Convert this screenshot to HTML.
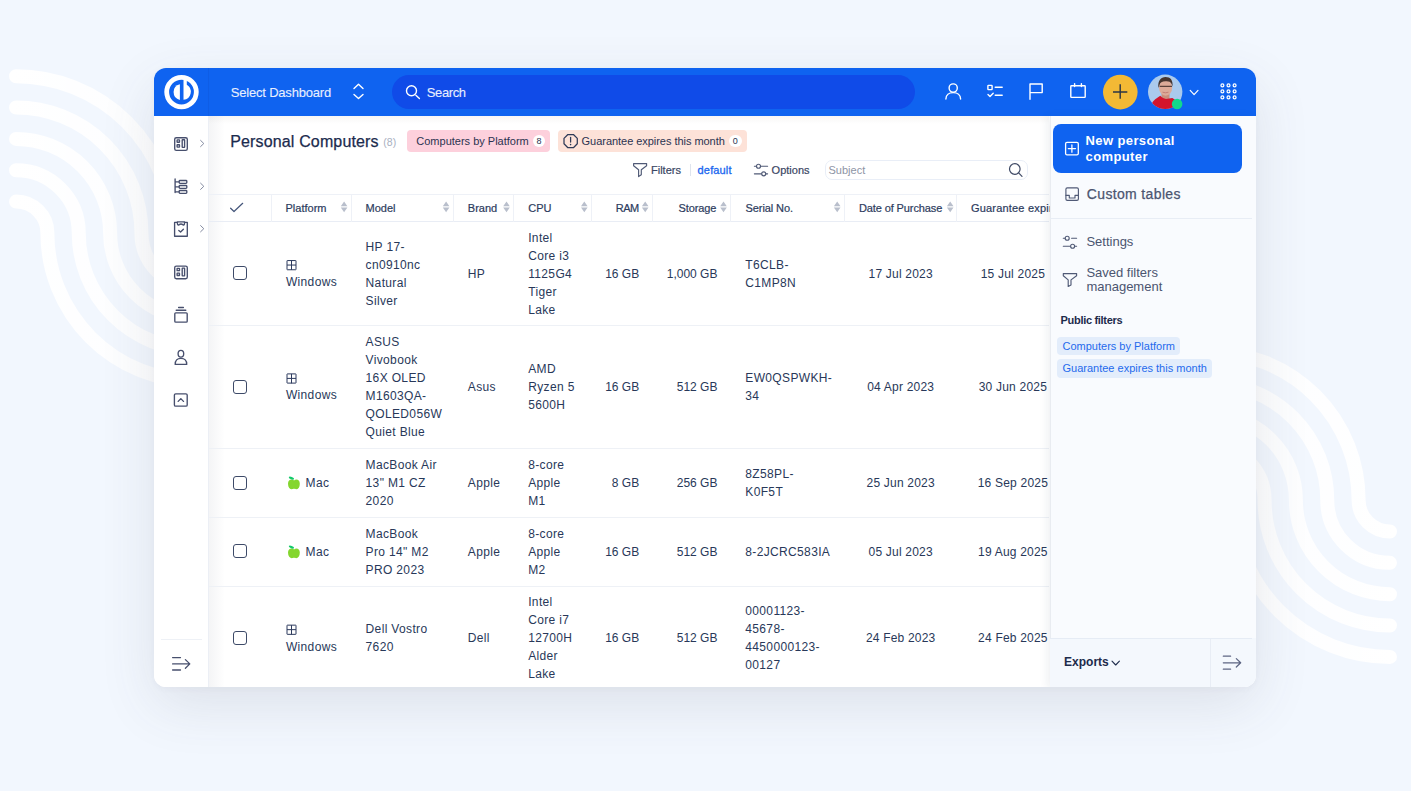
<!DOCTYPE html><html><head><meta charset="utf-8"><title>Personal Computers</title><style>
*{margin:0;padding:0;box-sizing:border-box}
html,body{width:1411px;height:791px;overflow:hidden}
body{font-family:"Liberation Sans",sans-serif;background:#f2f7fe;position:relative;color:#263655}
.t{position:absolute;white-space:nowrap;line-height:16px}
#deco{position:absolute;left:0;top:0}
#card{position:absolute;left:154px;top:68px;width:1102px;height:619.3px;border-radius:12px;overflow:hidden;background:#fff;box-shadow:0 18px 55px rgba(70,75,90,.12),0 2px 6px rgba(70,75,90,.04)}
.blk{position:absolute}
#ovl{position:absolute;left:0;top:0;pointer-events:none}
.hl{position:absolute;height:1px;background:#e9eef6}
.vl{position:absolute;width:1px;background:#e9eef6}
</style></head><body>
<svg id="deco" width="1411" height="791" viewBox="0 0 1411 791"><defs><linearGradient id="ag" gradientUnits="userSpaceOnUse" x1="10" y1="0" x2="170" y2="0"><stop offset="0" stop-color="#fff" stop-opacity="1"/><stop offset="1" stop-color="#fff" stop-opacity="0.82"/></linearGradient></defs><g fill="none" stroke="url(#ag)" stroke-width="14" stroke-linecap="round"><path d="M16,201.60 A31.40,31.40 0 0 1 47.40,233 A147.90,147.90 0 0 0 195.30,380.90"/><path d="M16,170.25 A62.75,62.75 0 0 1 78.75,233 A116.55,116.55 0 0 0 195.30,349.55"/><path d="M16,138.90 A94.10,94.10 0 0 1 110.10,233 A85.20,85.20 0 0 0 195.30,318.20"/><path d="M16,107.55 A125.45,125.45 0 0 1 141.45,233 A53.85,53.85 0 0 0 195.30,286.85"/><path d="M16,76.20 A156.80,156.80 0 0 1 172.80,233 A22.50,22.50 0 0 0 195.30,255.50"/></g><g fill="none" stroke="url(#ag)" stroke-width="14" stroke-linecap="round" transform="rotate(180 703 366.55)"><path d="M16,201.60 A31.40,31.40 0 0 1 47.40,233 A147.90,147.90 0 0 0 195.30,380.90"/><path d="M16,170.25 A62.75,62.75 0 0 1 78.75,233 A116.55,116.55 0 0 0 195.30,349.55"/><path d="M16,138.90 A94.10,94.10 0 0 1 110.10,233 A85.20,85.20 0 0 0 195.30,318.20"/><path d="M16,107.55 A125.45,125.45 0 0 1 141.45,233 A53.85,53.85 0 0 0 195.30,286.85"/><path d="M16,76.20 A156.80,156.80 0 0 1 172.80,233 A22.50,22.50 0 0 0 195.30,255.50"/></g></svg>
<div id="card">
<div class="blk" style="left:0.00px;top:0.00px;width:1102.00px;height:48.00px;background:#0f63f0"></div>
<div class="blk" style="left:54.00px;top:0.00px;width:1.00px;height:48.00px;background:#0e5de6"></div>
<div class="blk" style="left:237.50px;top:7.00px;width:523.50px;height:34.00px;background:#104be8;border-radius:17px"></div>
<div class="t" style="left:76.80px;top:16.60px;font-size:13px;color:#e8efff;letter-spacing:-0.2px;-webkit-text-stroke:0.1px #e8efff;">Select Dashboard</div>
<div class="t" style="left:272.80px;top:16.60px;font-size:13px;color:#e8efff;letter-spacing:-0.4px;-webkit-text-stroke:0.1px #e8efff;">Search</div>
<div class="blk" style="left:0.00px;top:48.00px;width:54.00px;height:572.00px;background:#fff"></div>
<div class="blk" style="left:54.00px;top:48.00px;width:1.00px;height:572.00px;background:#eceff5"></div>
<div class="blk" style="left:7.00px;top:571.00px;width:41.00px;height:1.00px;background:#eef1f6"></div>
<div class="blk" style="left:55.00px;top:48.00px;width:840.00px;height:572.00px;background:#fff"></div>
<div class="blk" style="left:55.00px;top:48.00px;width:16.00px;height:572.00px;background:linear-gradient(90deg,rgba(40,50,80,.05),rgba(40,50,80,0))"></div>
<div class="blk" style="left:55.00px;top:48.00px;width:840.00px;height:8.00px;background:linear-gradient(180deg,rgba(90,80,60,.05),rgba(90,80,60,0))"></div>
<div class="t" style="left:76.20px;top:65.81px;font-size:16px;color:#1b2b4e;letter-spacing:0.15px;-webkit-text-stroke:0.25px #1b2b4e;">Personal Computers</div>
<div class="t" style="left:229.30px;top:65.68px;font-size:10.5px;color:#a8b0bf;">(8)</div>
<div class="blk" style="left:253.00px;top:62.00px;width:143.40px;height:22.00px;background:#fdd0dc;border-radius:4px"></div>
<div class="t" style="left:262.30px;top:64.96px;font-size:11px;color:#2b3350;">Computers by Platform</div>
<div class="blk" style="left:378.60px;top:66.70px;width:12.60px;height:12.60px;background:#fff;border-radius:6.3px"></div>
<div class="t" style="left:382.00px;top:64.83px;font-size:9px;color:#2b3350;width:6px;text-align:center;">8</div>
<div class="blk" style="left:403.70px;top:62.20px;width:189.20px;height:21.60px;background:#fde2d8;border-radius:4px"></div>
<div class="t" style="left:427.60px;top:64.96px;font-size:11px;color:#2b3350;letter-spacing:-0.04px;">Guarantee expires this month</div>
<div class="blk" style="left:575.00px;top:66.70px;width:12.60px;height:12.60px;background:#fff;border-radius:6.3px"></div>
<div class="t" style="left:578.30px;top:64.83px;font-size:9px;color:#2b3350;width:6px;text-align:center;">0</div>
<div class="t" style="left:497.00px;top:93.66px;font-size:11px;color:#3a4663;-webkit-text-stroke:0.2px #3a4663;">Filters</div>
<div class="blk" style="left:535.50px;top:96.00px;width:1.00px;height:11.60px;background:#dfe4ee"></div>
<div class="t" style="left:543.60px;top:93.66px;font-size:11px;color:#1a66ef;letter-spacing:0.15px;-webkit-text-stroke:0.3px #1a66ef;">default</div>
<div class="t" style="left:617.60px;top:93.66px;font-size:11px;color:#3a4663;-webkit-text-stroke:0.2px #3a4663;">Options</div>
<div class="blk" style="left:671.20px;top:91.60px;width:203.20px;height:20.20px;background:#fff;border:1px solid #e9eef7;border-radius:7px"></div>
<div class="t" style="left:674.50px;top:93.86px;font-size:11px;color:#8d94a5;">Subject</div>
<div class="blk" style="left:55.00px;top:126.30px;width:840.00px;height:1.00px;background:#eef1f7"></div>
<div class="blk" style="left:55.00px;top:153.20px;width:840.00px;height:1.00px;background:#e9edf5"></div>
<div class="blk" style="left:117.20px;top:127.00px;width:1.00px;height:26.50px;background:#eef1f7"></div>
<div class="blk" style="left:196.90px;top:127.00px;width:1.00px;height:26.50px;background:#eef1f7"></div>
<div class="blk" style="left:298.90px;top:127.00px;width:1.00px;height:26.50px;background:#eef1f7"></div>
<div class="blk" style="left:359.10px;top:127.00px;width:1.00px;height:26.50px;background:#eef1f7"></div>
<div class="blk" style="left:436.90px;top:127.00px;width:1.00px;height:26.50px;background:#eef1f7"></div>
<div class="blk" style="left:498.00px;top:127.00px;width:1.00px;height:26.50px;background:#eef1f7"></div>
<div class="blk" style="left:575.80px;top:127.00px;width:1.00px;height:26.50px;background:#eef1f7"></div>
<div class="blk" style="left:689.70px;top:127.00px;width:1.00px;height:26.50px;background:#eef1f7"></div>
<div class="blk" style="left:802.00px;top:127.00px;width:1.00px;height:26.50px;background:#eef1f7"></div>
<div class="t" style="left:131.50px;top:131.56px;font-size:11px;color:#2c3b5d;-webkit-text-stroke:0.2px #2c3b5d;">Platform</div>
<div class="t" style="left:211.60px;top:131.56px;font-size:11px;color:#2c3b5d;-webkit-text-stroke:0.2px #2c3b5d;">Model</div>
<div class="t" style="left:313.80px;top:131.56px;font-size:11px;color:#2c3b5d;-webkit-text-stroke:0.2px #2c3b5d;">Brand</div>
<div class="t" style="left:374.20px;top:131.56px;font-size:11px;color:#2c3b5d;-webkit-text-stroke:0.2px #2c3b5d;">CPU</div>
<div class="t" style="left:461.70px;top:131.56px;font-size:11px;color:#2c3b5d;letter-spacing:-0.5px;-webkit-text-stroke:0.2px #2c3b5d;">RAM</div>
<div class="t" style="left:524.50px;top:131.56px;font-size:11px;color:#2c3b5d;letter-spacing:-0.1px;-webkit-text-stroke:0.2px #2c3b5d;">Storage</div>
<div class="t" style="left:591.60px;top:131.56px;font-size:11px;color:#2c3b5d;letter-spacing:-0.1px;-webkit-text-stroke:0.2px #2c3b5d;">Serial No.</div>
<div class="t" style="left:704.90px;top:131.56px;font-size:11px;color:#2c3b5d;letter-spacing:-0.1px;-webkit-text-stroke:0.2px #2c3b5d;">Date of Purchase</div>
<div class="t" style="left:816.90px;top:131.56px;font-size:11px;color:#2c3b5d;letter-spacing:0.2px;-webkit-text-stroke:0.2px #2c3b5d;">Guarantee expiry</div>
<div class="blk" style="left:79.00px;top:198.35px;width:14.00px;height:14.00px;border:1.3px solid #3d4a68;border-radius:3px"></div>
<div class="t" style="left:131.90px;top:188.05px;font-size:12px;color:#283859;letter-spacing:0.35px;"></div>
<div class="t" style="left:131.90px;top:206.05px;font-size:12px;color:#283859;letter-spacing:0.35px;">Windows</div>
<div class="t" style="left:211.60px;top:170.85px;font-size:12px;color:#283859;letter-spacing:0.35px;">HP 17-</div>
<div class="t" style="left:211.60px;top:188.85px;font-size:12px;color:#283859;letter-spacing:0.35px;">cn0910nc</div>
<div class="t" style="left:211.60px;top:206.85px;font-size:12px;color:#283859;letter-spacing:0.35px;">Natural</div>
<div class="t" style="left:211.60px;top:224.85px;font-size:12px;color:#283859;letter-spacing:0.35px;">Silver</div>
<div class="t" style="left:313.80px;top:197.85px;font-size:12px;color:#283859;letter-spacing:0.35px;">HP</div>
<div class="t" style="left:374.20px;top:161.85px;font-size:12px;color:#283859;letter-spacing:0.35px;">Intel</div>
<div class="t" style="left:374.20px;top:179.85px;font-size:12px;color:#283859;letter-spacing:0.35px;">Core i3</div>
<div class="t" style="left:374.20px;top:197.85px;font-size:12px;color:#283859;letter-spacing:0.35px;">1125G4</div>
<div class="t" style="left:374.20px;top:215.85px;font-size:12px;color:#283859;letter-spacing:0.35px;">Tiger</div>
<div class="t" style="left:374.20px;top:233.85px;font-size:12px;color:#283859;letter-spacing:0.35px;">Lake</div>
<div class="t" style="right:616.80px;top:197.85px;font-size:12px;color:#283859;">16 GB</div>
<div class="t" style="right:538.60px;top:197.85px;font-size:12px;color:#283859;">1,000 GB</div>
<div class="t" style="left:591.30px;top:188.85px;font-size:12px;color:#283859;letter-spacing:0.35px;">T6CLB-</div>
<div class="t" style="left:591.30px;top:206.85px;font-size:12px;color:#283859;letter-spacing:0.35px;">C1MP8N</div>
<div class="t" style="left:646.70px;width:200px;text-align:center;top:197.85px;font-size:12px;color:#283859;letter-spacing:0.2px;">17 Jul 2023</div>
<div class="t" style="left:758.90px;width:200px;text-align:center;top:197.85px;font-size:12px;color:#283859;letter-spacing:0.2px;">15 Jul 2025</div>
<div class="blk" style="left:55.00px;top:257.20px;width:840.00px;height:1.00px;background:#eef1f6"></div>
<div class="blk" style="left:79.00px;top:311.70px;width:14.00px;height:14.00px;border:1.3px solid #3d4a68;border-radius:3px"></div>
<div class="t" style="left:131.90px;top:301.40px;font-size:12px;color:#283859;letter-spacing:0.35px;"></div>
<div class="t" style="left:131.90px;top:319.40px;font-size:12px;color:#283859;letter-spacing:0.35px;">Windows</div>
<div class="t" style="left:211.60px;top:266.20px;font-size:12px;color:#283859;letter-spacing:0.35px;">ASUS</div>
<div class="t" style="left:211.60px;top:284.20px;font-size:12px;color:#283859;letter-spacing:0.35px;">Vivobook</div>
<div class="t" style="left:211.60px;top:302.20px;font-size:12px;color:#283859;letter-spacing:0.35px;">16X OLED</div>
<div class="t" style="left:211.60px;top:320.20px;font-size:12px;color:#283859;letter-spacing:0.35px;">M1603QA-</div>
<div class="t" style="left:211.60px;top:338.20px;font-size:12px;color:#283859;letter-spacing:0.35px;">QOLED056W</div>
<div class="t" style="left:211.60px;top:356.20px;font-size:12px;color:#283859;letter-spacing:0.35px;">Quiet Blue</div>
<div class="t" style="left:313.80px;top:311.20px;font-size:12px;color:#283859;letter-spacing:0.35px;">Asus</div>
<div class="t" style="left:374.20px;top:293.20px;font-size:12px;color:#283859;letter-spacing:0.35px;">AMD</div>
<div class="t" style="left:374.20px;top:311.20px;font-size:12px;color:#283859;letter-spacing:0.35px;">Ryzen 5</div>
<div class="t" style="left:374.20px;top:329.20px;font-size:12px;color:#283859;letter-spacing:0.35px;">5600H</div>
<div class="t" style="right:616.80px;top:311.20px;font-size:12px;color:#283859;">16 GB</div>
<div class="t" style="right:538.60px;top:311.20px;font-size:12px;color:#283859;">512 GB</div>
<div class="t" style="left:591.30px;top:302.20px;font-size:12px;color:#283859;letter-spacing:0.35px;">EW0QSPWKH-</div>
<div class="t" style="left:591.30px;top:320.20px;font-size:12px;color:#283859;letter-spacing:0.35px;">34</div>
<div class="t" style="left:646.70px;width:200px;text-align:center;top:311.20px;font-size:12px;color:#283859;letter-spacing:0.2px;">04 Apr 2023</div>
<div class="t" style="left:758.90px;width:200px;text-align:center;top:311.20px;font-size:12px;color:#283859;letter-spacing:0.2px;">30 Jun 2025</div>
<div class="blk" style="left:55.00px;top:379.80px;width:840.00px;height:1.00px;background:#eef1f6"></div>
<div class="blk" style="left:79.00px;top:407.55px;width:14.00px;height:14.00px;border:1.3px solid #3d4a68;border-radius:3px"></div>
<div class="t" style="left:151.60px;top:407.05px;font-size:12px;color:#283859;letter-spacing:0.35px;">Mac</div>
<div class="t" style="left:211.60px;top:389.05px;font-size:12px;color:#283859;letter-spacing:0.35px;">MacBook Air</div>
<div class="t" style="left:211.60px;top:407.05px;font-size:12px;color:#283859;letter-spacing:0.35px;">13&quot; M1 CZ</div>
<div class="t" style="left:211.60px;top:425.05px;font-size:12px;color:#283859;letter-spacing:0.35px;">2020</div>
<div class="t" style="left:313.80px;top:407.05px;font-size:12px;color:#283859;letter-spacing:0.35px;">Apple</div>
<div class="t" style="left:374.20px;top:389.05px;font-size:12px;color:#283859;letter-spacing:0.35px;">8-core</div>
<div class="t" style="left:374.20px;top:407.05px;font-size:12px;color:#283859;letter-spacing:0.35px;">Apple</div>
<div class="t" style="left:374.20px;top:425.05px;font-size:12px;color:#283859;letter-spacing:0.35px;">M1</div>
<div class="t" style="right:616.80px;top:407.05px;font-size:12px;color:#283859;">8 GB</div>
<div class="t" style="right:538.60px;top:407.05px;font-size:12px;color:#283859;">256 GB</div>
<div class="t" style="left:591.30px;top:398.05px;font-size:12px;color:#283859;letter-spacing:0.35px;">8Z58PL-</div>
<div class="t" style="left:591.30px;top:416.05px;font-size:12px;color:#283859;letter-spacing:0.35px;">K0F5T</div>
<div class="t" style="left:646.70px;width:200px;text-align:center;top:407.05px;font-size:12px;color:#283859;letter-spacing:0.2px;">25 Jun 2023</div>
<div class="t" style="left:758.90px;width:200px;text-align:center;top:407.05px;font-size:12px;color:#283859;letter-spacing:0.2px;">16 Sep 2025</div>
<div class="blk" style="left:55.00px;top:448.90px;width:840.00px;height:1.00px;background:#eef1f6"></div>
<div class="blk" style="left:79.00px;top:476.45px;width:14.00px;height:14.00px;border:1.3px solid #3d4a68;border-radius:3px"></div>
<div class="t" style="left:151.60px;top:475.95px;font-size:12px;color:#283859;letter-spacing:0.35px;">Mac</div>
<div class="t" style="left:211.60px;top:457.95px;font-size:12px;color:#283859;letter-spacing:0.35px;">MacBook</div>
<div class="t" style="left:211.60px;top:475.95px;font-size:12px;color:#283859;letter-spacing:0.35px;">Pro 14&quot; M2</div>
<div class="t" style="left:211.60px;top:493.95px;font-size:12px;color:#283859;letter-spacing:0.35px;">PRO 2023</div>
<div class="t" style="left:313.80px;top:475.95px;font-size:12px;color:#283859;letter-spacing:0.35px;">Apple</div>
<div class="t" style="left:374.20px;top:457.95px;font-size:12px;color:#283859;letter-spacing:0.35px;">8-core</div>
<div class="t" style="left:374.20px;top:475.95px;font-size:12px;color:#283859;letter-spacing:0.35px;">Apple</div>
<div class="t" style="left:374.20px;top:493.95px;font-size:12px;color:#283859;letter-spacing:0.35px;">M2</div>
<div class="t" style="right:616.80px;top:475.95px;font-size:12px;color:#283859;">16 GB</div>
<div class="t" style="right:538.60px;top:475.95px;font-size:12px;color:#283859;">512 GB</div>
<div class="t" style="left:591.30px;top:475.95px;font-size:12px;color:#283859;letter-spacing:0.35px;">8-2JCRC583IA</div>
<div class="t" style="left:646.70px;width:200px;text-align:center;top:475.95px;font-size:12px;color:#283859;letter-spacing:0.2px;">05 Jul 2023</div>
<div class="t" style="left:758.90px;width:200px;text-align:center;top:475.95px;font-size:12px;color:#283859;letter-spacing:0.2px;">19 Aug 2025</div>
<div class="blk" style="left:55.00px;top:517.60px;width:840.00px;height:1.00px;background:#eef1f6"></div>
<div class="blk" style="left:79.00px;top:562.95px;width:14.00px;height:14.00px;border:1.3px solid #3d4a68;border-radius:3px"></div>
<div class="t" style="left:131.90px;top:552.65px;font-size:12px;color:#283859;letter-spacing:0.35px;"></div>
<div class="t" style="left:131.90px;top:570.65px;font-size:12px;color:#283859;letter-spacing:0.35px;">Windows</div>
<div class="t" style="left:211.60px;top:553.45px;font-size:12px;color:#283859;letter-spacing:0.35px;">Dell Vostro</div>
<div class="t" style="left:211.60px;top:571.45px;font-size:12px;color:#283859;letter-spacing:0.35px;">7620</div>
<div class="t" style="left:313.80px;top:562.45px;font-size:12px;color:#283859;letter-spacing:0.35px;">Dell</div>
<div class="t" style="left:374.20px;top:526.45px;font-size:12px;color:#283859;letter-spacing:0.35px;">Intel</div>
<div class="t" style="left:374.20px;top:544.45px;font-size:12px;color:#283859;letter-spacing:0.35px;">Core i7</div>
<div class="t" style="left:374.20px;top:562.45px;font-size:12px;color:#283859;letter-spacing:0.35px;">12700H</div>
<div class="t" style="left:374.20px;top:580.45px;font-size:12px;color:#283859;letter-spacing:0.35px;">Alder</div>
<div class="t" style="left:374.20px;top:598.45px;font-size:12px;color:#283859;letter-spacing:0.35px;">Lake</div>
<div class="t" style="right:616.80px;top:562.45px;font-size:12px;color:#283859;">16 GB</div>
<div class="t" style="right:538.60px;top:562.45px;font-size:12px;color:#283859;">512 GB</div>
<div class="t" style="left:591.30px;top:535.45px;font-size:12px;color:#283859;letter-spacing:0.35px;">00001123-</div>
<div class="t" style="left:591.30px;top:553.45px;font-size:12px;color:#283859;letter-spacing:0.35px;">45678-</div>
<div class="t" style="left:591.30px;top:571.45px;font-size:12px;color:#283859;letter-spacing:0.35px;">4450000123-</div>
<div class="t" style="left:591.30px;top:589.45px;font-size:12px;color:#283859;letter-spacing:0.35px;">00127</div>
<div class="t" style="left:646.70px;width:200px;text-align:center;top:562.45px;font-size:12px;color:#283859;letter-spacing:0.2px;">24 Feb 2023</div>
<div class="t" style="left:758.90px;width:200px;text-align:center;top:562.45px;font-size:12px;color:#283859;letter-spacing:0.2px;">24 Feb 2025</div>
<div class="blk" style="left:895.50px;top:48.00px;width:206.50px;height:572.00px;background:#f9fbfe;box-shadow:-3px 0 8px rgba(30,50,90,.07)"></div>
<div class="blk" style="left:895.50px;top:48.00px;width:1.00px;height:572.00px;background:#e9ecf1"></div>
<div class="blk" style="left:899.10px;top:56.00px;width:189.10px;height:49.20px;background:#0f63f0;border-radius:8px"></div>
<div class="t" style="left:931.50px;top:65.20px;font-size:13px;color:#ffffff;font-weight:bold;letter-spacing:0.4px;">New personal</div>
<div class="t" style="left:931.50px;top:80.50px;font-size:13px;color:#ffffff;font-weight:bold;letter-spacing:0.4px;">computer</div>
<div class="t" style="left:932.80px;top:117.87px;font-size:14px;color:#4b5570;letter-spacing:0.35px;-webkit-text-stroke:0.25px #4b5570;">Custom tables</div>
<div class="blk" style="left:896.00px;top:150.00px;width:202.00px;height:1.00px;background:#e8edf5"></div>
<div class="t" style="left:932.40px;top:165.90px;font-size:13px;color:#4b5570;">Settings</div>
<div class="t" style="left:932.40px;top:197.30px;font-size:13px;color:#4b5570;">Saved filters</div>
<div class="t" style="left:932.40px;top:211.00px;font-size:13px;color:#4b5570;">management</div>
<div class="t" style="left:906.50px;top:244.06px;font-size:11px;color:#1d2b4b;font-weight:bold;letter-spacing:-0.3px;">Public filters</div>
<div class="blk" style="left:903.00px;top:268.70px;width:123.00px;height:18.20px;background:#e3edfb;border-radius:4px"></div>
<div class="t" style="left:908.50px;top:269.66px;font-size:11px;color:#1f6aed;">Computers by Platform</div>
<div class="blk" style="left:903.00px;top:291.00px;width:155.00px;height:18.80px;background:#e3edfb;border-radius:4px"></div>
<div class="t" style="left:908.50px;top:291.76px;font-size:11px;color:#1f6aed;">Guarantee expires this month</div>
<div class="blk" style="left:895.50px;top:570.00px;width:206.50px;height:50.00px;background:#f4f8fd"></div>
<div class="blk" style="left:896.00px;top:570.00px;width:202.00px;height:1.00px;background:#e6ecf5"></div>
<div class="blk" style="left:1056.00px;top:571.00px;width:1.00px;height:49.00px;background:#e8edf5"></div>
<div class="t" style="left:910.10px;top:586.03px;font-size:12px;color:#1d2b4b;font-weight:bold;">Exports</div>
</div>
<svg id="ovl" width="1411" height="791" viewBox="0 0 1411 791"><circle cx="181.5" cy="92.1" r="14.8" fill="none" stroke="#fff" stroke-width="4.8"/><path d="M179.9,84.2 A8.1,8.1 0 0 0 179.9,100 Z" fill="#fff"/><path d="M183.5,79.6 H186.8 V84.8 A8.1,8.1 0 0 1 183.5,99.85 Z" fill="#fff"/><g fill="none" stroke="#ffffff" stroke-width="1.4" stroke-linecap="round" stroke-linejoin="round"><path d="M354,88.5 L358.5,84.2 L363,88.5 M354,94.4 L358.5,98.5 L363,94.4"/><circle cx="411.5" cy="90.8" r="5"/><path d="M415.9,95.3 L419.4,98.6"/><circle cx="953.2" cy="88" r="4.1"/><path d="M945.9,99 C945.9,94.9 949.1,92.6 953.2,92.6 C957.3,92.6 960.6,94.9 960.6,99"/><rect x="987.9" y="85.4" width="4.2" height="4.2" rx="0.5"/><path d="M995.2,87.3 H1002.2 M995.2,95.2 H1002.2 M988,94.6 L990,96.6 L993.2,93.2"/><path d="M1030,99.2 V84 H1042.2 V92.6 H1030.3"/><rect x="1070.8" y="85.8" width="14.4" height="11.6" rx="0.6"/><path d="M1074.6,83.6 V86.5 M1081.4,83.6 V86.5"/><path d="M1190.2,90.4 L1194.1,94.6 L1198,90.4" stroke-width="1.2"/></g><g fill="none" stroke="#fff" stroke-width="1.25"><circle cx="1222.4" cy="85.4" r="1.45"/><circle cx="1222.4" cy="91.4" r="1.45"/><circle cx="1222.4" cy="97.4" r="1.45"/><circle cx="1228.5" cy="85.4" r="1.45"/><circle cx="1228.5" cy="91.4" r="1.45"/><circle cx="1228.5" cy="97.4" r="1.45"/><circle cx="1234.6" cy="85.4" r="1.45"/><circle cx="1234.6" cy="91.4" r="1.45"/><circle cx="1234.6" cy="97.4" r="1.45"/></g><circle cx="1120.3" cy="92.1" r="17.3" fill="#f3b935"/><path d="M1113,92 H1127.3 M1120.2,84.3 V98.8" stroke="#2b3445" stroke-width="1.4"/><clipPath id="av"><circle cx="1165.2" cy="91.8" r="17.2"/></clipPath><g clip-path="url(#av)"><rect x="1147" y="74" width="37" height="37" fill="#aacaed"/><rect x="1161.5" y="92" width="8" height="7" fill="#c98f7c"/><path d="M1150,112 L1151.5,104 C1153,100.5 1157,98 1160.3,95.8 C1162,97.5 1164,98.8 1166,99 L1172.3,98 C1175,99.5 1177.5,101.5 1178.5,104.5 L1181,112 Z" fill="#d3142c"/><ellipse cx="1165.6" cy="87.6" rx="6.6" ry="8.1" fill="#dcab98"/><path d="M1158.4,88 C1157.6,80.5 1161,77 1165.5,77 C1170.5,77 1173,80 1172.6,86.5 L1171.6,84 C1170.5,81.5 1168.5,81 1165.5,81.2 C1162,81.3 1160,82.2 1159.5,85 Z" fill="#463630"/><path d="M1159.6,86.4 H1172" stroke="#5b423a" stroke-width="1.1"/><path d="M1162.5,92.2 Q1165.5,93.4 1168.5,92.2" stroke="#c07a70" stroke-width="0.9" fill="none"/></g><circle cx="1177.1" cy="104" r="5.3" fill="#12d98c"/><g fill="none" stroke="#474f6d" stroke-width="1.35" stroke-linecap="round" stroke-linejoin="round"><rect x="174.7" y="137.7" width="12.6" height="12.6" rx="1.6"/><rect x="177.1" y="139.9" width="2.4" height="2.4" rx="0.3"/><rect x="177.1" y="144.7" width="2.4" height="2.4" rx="0.3"/><rect x="182.2" y="139.7" width="2.4" height="7.7" rx="0.3"/><rect x="174.7" y="266.09999999999997" width="12.6" height="12.6" rx="1.6"/><rect x="177.1" y="268.29999999999995" width="2.4" height="2.4" rx="0.3"/><rect x="177.1" y="273.09999999999997" width="2.4" height="2.4" rx="0.3"/><rect x="182.2" y="268.09999999999997" width="2.4" height="7.7" rx="0.3"/><path d="M175.1,179 V192.5 M175.1,181.9 H178.8 M175.1,186.9 H178.8 M175.1,191.9 H178.8"/><rect x="179.2" y="180.5" width="7.6" height="2.8" rx="0.8"/><rect x="179.2" y="185.5" width="7.6" height="2.8" rx="0.8"/><rect x="179.2" y="190.5" width="7.6" height="2.8" rx="0.8"/><path d="M177.4,222.3 H174.6 V236.2 H187.3 V222.3 H184.5"/><path d="M177.4,221.8 H184.5 V223.6 C184.5,225 183.7,225.3 182.8,224.6 C181.8,223.9 180.2,223.9 179.2,224.6 C178.3,225.3 177.4,225 177.4,223.6 Z"/><path d="M178.8,230.4 L180.6,232 L183.4,229.3"/><path d="M178.6,307.5 H183.4 M176.2,310.2 H185.8"/><rect x="174.8" y="312.8" width="12.4" height="9.4" rx="1"/><ellipse cx="180.9" cy="353.8" rx="2.8" ry="3.4"/><path d="M175.2,364.4 C175.2,360.2 177.6,358.4 180.9,358.4 C184.2,358.4 186.7,360.2 186.7,364.4 Z"/><rect x="174.4" y="393.8" width="12.8" height="12.4" rx="1.3"/><path d="M178.2,401.4 L180.8,398.6 L183.5,401.4"/><path d="M200.6,140.4 L203.8,143.5 L200.6,146.6" stroke="#838aa0" stroke-width="1"/><path d="M200.6,183.20000000000002 L203.8,186.3 L200.6,189.4" stroke="#838aa0" stroke-width="1"/><path d="M200.6,225.6 L203.8,228.7 L200.6,231.79999999999998" stroke="#838aa0" stroke-width="1"/><path d="M172.6,657.6 H180.5 M172.6,663.9 H189.6 M185.4,659.6 L189.8,663.9 L185.4,668.2 M172.6,670 H180.5" stroke-width="1.3"/></g><g fill="none" stroke="#505a76" stroke-width="1.15" stroke-linecap="round" stroke-linejoin="round"><path d="M633.6,163.6 H646.6 V165.8 L641.3,169.7 V174.8 L638.6,176.6 V169.7 L633.6,165.8 Z"/><path d="M754.4,166.2 H756.2 M760.8,166.2 H767.6 M754.4,173.8 H761.3 M766,173.8 H767.6"/><circle cx="758.5" cy="166.2" r="2"/><circle cx="763.7" cy="173.8" r="2"/><circle cx="1014.8" cy="169" r="5.3" stroke="#3f4a66" stroke-width="1.2"/><path d="M1018.9,173.2 L1022,176.3" stroke="#3f4a66" stroke-width="1.2"/></g><g fill="none" stroke="#2f3a57" stroke-width="1.25" stroke-linejoin="round"><path d="M567.9,134.5 H573.4 L577.3,138.4 V143.8 L573.4,147.7 H567.9 L564,143.8 V138.4 Z"/><path d="M570.6,137.4 V142" stroke-linecap="round"/></g><circle cx="570.6" cy="144.6" r="0.8" fill="#2f3a57"/><path d="M230.6,208.2 L234,211.5 L242.7,203.3" fill="none" stroke="#44557a" stroke-width="1.2" stroke-linecap="round" stroke-linejoin="round"/><path d="M340.8,206.3 L344.1,201.6 L347.40000000000003,206.3 Z M340.8,207.4 L344.1,212.2 L347.40000000000003,207.4 Z" fill="#b9bfcc"/><path d="M442.8,206.3 L446.1,201.6 L449.40000000000003,206.3 Z M442.8,207.4 L446.1,212.2 L449.40000000000003,207.4 Z" fill="#b9bfcc"/><path d="M503.2,206.3 L506.5,201.6 L509.8,206.3 Z M503.2,207.4 L506.5,212.2 L509.8,207.4 Z" fill="#b9bfcc"/><path d="M581.0,206.3 L584.3,201.6 L587.5999999999999,206.3 Z M581.0,207.4 L584.3,212.2 L587.5999999999999,207.4 Z" fill="#b9bfcc"/><path d="M641.9000000000001,206.3 L645.2,201.6 L648.5,206.3 Z M641.9000000000001,207.4 L645.2,212.2 L648.5,207.4 Z" fill="#b9bfcc"/><path d="M720.2,206.3 L723.5,201.6 L726.8,206.3 Z M720.2,207.4 L723.5,212.2 L726.8,207.4 Z" fill="#b9bfcc"/><path d="M833.9000000000001,206.3 L837.2,201.6 L840.5,206.3 Z M833.9000000000001,207.4 L837.2,212.2 L840.5,207.4 Z" fill="#b9bfcc"/><path d="M946.9000000000001,206.3 L950.2,201.6 L953.5,206.3 Z M946.9000000000001,207.4 L950.2,212.2 L953.5,207.4 Z" fill="#b9bfcc"/><g fill="none" stroke="#2d3b5e" stroke-width="1"><rect x="287" y="260.55" width="9" height="9.2" rx="0.3"/><path d="M291.5,260.55 V269.95 M287,265.05 H296"/></g><g fill="none" stroke="#2d3b5e" stroke-width="1"><rect x="287" y="373.90" width="9" height="9.2" rx="0.3"/><path d="M291.5,373.90 V383.30 M287,378.40 H296"/></g><path d="M294,480.55 C292.5,479.05 288,478.85 288,483.65 C288,487.35 290,489.25 291.8,489.25 C292.8,489.25 293.3,488.85 294,488.85 C294.7,488.85 295.2,489.25 296.2,489.25 C298,489.25 299.8,487.35 299.8,483.65 C299.8,478.85 295.5,479.05 294,480.55 Z" fill="#84d62e"/><ellipse cx="291.4" cy="478.15" rx="2.8" ry="1.25" transform="rotate(20 291.4 478.15)" fill="#14c96b"/><path d="M294,549.45 C292.5,547.95 288,547.75 288,552.55 C288,556.25 290,558.15 291.8,558.15 C292.8,558.15 293.3,557.75 294,557.75 C294.7,557.75 295.2,558.15 296.2,558.15 C298,558.15 299.8,556.25 299.8,552.55 C299.8,547.75 295.5,547.95 294,549.45 Z" fill="#84d62e"/><ellipse cx="291.4" cy="547.05" rx="2.8" ry="1.25" transform="rotate(20 291.4 547.05)" fill="#14c96b"/><g fill="none" stroke="#2d3b5e" stroke-width="1"><rect x="287" y="625.15" width="9" height="9.2" rx="0.3"/><path d="M291.5,625.15 V634.55 M287,629.65 H296"/></g><g fill="none" stroke="#fff" stroke-width="1.3" stroke-linecap="round" stroke-linejoin="round"><rect x="1065.6" y="142.4" width="12.7" height="12.4" rx="1.4"/><path d="M1068.3,148.6 H1075.5 M1071.9,145 V152.2"/></g><g fill="none" stroke="#505a76" stroke-width="1.15" stroke-linecap="round" stroke-linejoin="round"><rect x="1065.9" y="187.9" width="12.5" height="12.5" rx="1.4"/><path d="M1065.9,195.3 H1069.3 V198 H1075 V195.3 H1078.4"/><path d="M1063.3,238.2 H1064.6 M1071.6,238.2 H1076.6 M1063.3,246.2 H1069.8 M1075.2,246.2 H1076.6"/><circle cx="1067.2" cy="238.2" r="2"/><circle cx="1072.6" cy="246.2" r="2"/><path d="M1063.3,273.6 H1076.6 V275.8 L1071,279.9 V285.1 L1068.2,286.5 V279.9 L1063.3,275.8 Z"/><path d="M1112,661.2 L1115.7,665 L1119.4,661.2" stroke="#1d2b4b" stroke-width="1.1"/><path d="M1223.3,656.2 H1230.6 M1223.3,662.8 H1240.6 M1236.3,658.6 L1240.7,662.8 L1236.3,667 M1223.3,669.2 H1230.6" stroke="#5d6583" stroke-width="1.2"/></g></svg>
</body></html>
